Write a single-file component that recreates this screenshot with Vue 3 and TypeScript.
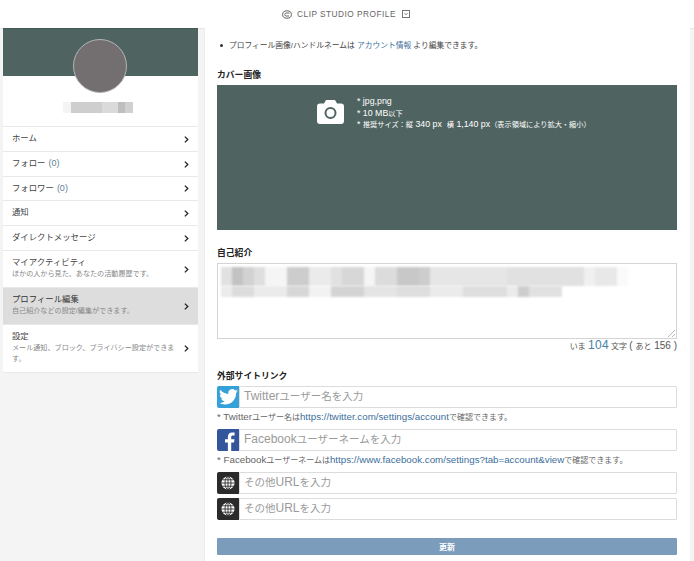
<script setup lang="ts">
const jp = '"Liberation Sans", "Noto Sans CJK JP", sans-serif'

const menu = [
  { label: 'ホーム' },
  { label: 'フォロー', count: '(0)' },
  { label: 'フォロワー', count: '(0)', h: 24 },
  { label: '通知' },
  { label: 'ダイレクトメッセージ' },
  { label: 'マイアクティビティ', sub: 'ほかの人から見た、あなたの活動履歴です。', h: 37 },
  { label: 'プロフィール編集', sub: '自己紹介などの設定/編集ができます。', h: 37, active: true },
  { label: '設定', sub: 'メール通知、ブロック、プライバシー設定ができます。', h: 48 },
]

// mosaic of the redacted bio text, one grey per 11px tile
const bioRows = [
  { h: 19, tiles: [225, 195, 210, 222, 245, 245, 205, 205, 235, 235, 225, 215, 215, 245, 220, 220, 200, 200, 205, 230, 230, 230, 230, 230, 230, 230, 225, 225, 225, 225, 225, 225, 225, 240, 232, 232, 250] },
  { h: 11, tiles: [235, 220, 220, 235, 235, 235, 215, 215, 242, 242, 212, 212, 212, 228, 228, 228, 222, 222, 222, 235, 235, 235, 222, 222, 222, 222, 235, 205, 225, 225, 225] },
]
const nameTiles = [244, 206, 206, 206, 206, 218, 218, 190, 208]
const tone = (g: number) => ({ background: `rgb(${g},${g},${g})` })
</script>

<template>
  <div class="page" :style="{ fontFamily: jp }">
    <header class="top">
      <svg width="10" height="9" viewBox="0 0 10 9">
        <ellipse cx="5" cy="4.5" rx="4.4" ry="3.7" fill="none" stroke="#666" stroke-width="1" />
        <path d="M7.500 3H4.300a1.500 1.500 0 0 0 0 3H7" fill="none" stroke="#666" stroke-width="1" />
      </svg>
      <span class="brand">CLIP STUDIO PROFILE</span>
      <svg width="8" height="8" viewBox="0 0 8 8">
        <rect x="0.5" y="0.5" width="7" height="7" fill="none" stroke="#777" />
        <path d="M2.500 3.200L4 4.800l1.500-1.600" fill="none" stroke="#777" />
      </svg>
    </header>

    <div class="body">
      <aside class="side">
        <div class="profile">
          <div class="cover-mini"></div>
          <div class="avatar"></div>
          <div class="name">
            <i v-for="(g, i) in nameTiles" :key="i" :style="tone(g)"></i>
          </div>
        </div>
        <ul class="menu">
          <li
            v-for="item in menu"
            :key="item.label"
            :class="{ active: item.active }"
            :style="{ height: (item.h ?? 25) + 'px' }"
          >
            <div class="menu-text">
              <div class="menu-label">
                {{ item.label }}<span v-if="item.count" class="count">{{ item.count }}</span>
              </div>
              <div v-if="item.sub" class="menu-sub">{{ item.sub }}</div>
            </div>
            <svg class="chev" width="5" height="7" viewBox="0 0 5 7">
              <path d="M0.800 0.600L3.800 3.500 0.800 6.400" fill="none" stroke="#222" stroke-width="1.300" />
            </svg>
          </li>
        </ul>
      </aside>

      <main class="main">
        <p class="notice">
          <span class="dot"></span>プロフィール画像/ハンドルネームは <a>アカウント情報</a> より編集できます。
        </p>

        <h3 class="cover-title">カバー画像</h3>
        <div class="cover">
          <svg class="camera" width="27" height="24" viewBox="0 0 27 24">
            <path d="M9 0h9l2 3.500h4a3 3 0 0 1 3 3V21a3 3 0 0 1-3 3H3a3 3 0 0 1-3-3V6.500a3 3 0 0 1 3-3h4z" fill="#fff" />
            <circle cx="13.500" cy="13" r="5" fill="none" stroke="#4f6461" stroke-width="2" />
          </svg>
          <div class="cover-info">
            <div><span class="lat">* jpg,png</span></div>
            <div><span class="lat">* 10 MB</span>以下</div>
            <div><span class="lat">* </span>推奨サイズ：縦<span class="lat"> 340 px&nbsp;&nbsp;</span>横<span class="lat"> 1,140 px</span>（表示領域により拡大・縮小）</div>
          </div>
        </div>

        <h3 class="bio-title">自己紹介</h3>
        <div class="bio">
          <div v-for="(row, r) in bioRows" :key="r" class="bio-row" :style="{ height: row.h + 'px' }">
            <i v-for="(g, i) in row.tiles" :key="i" :style="tone(g)"></i>
          </div>
          <svg class="grip" width="7" height="7" viewBox="0 0 7 7">
            <path d="M0 7L7 0M4 7L7 4" stroke="#999" stroke-width="0.7" />
          </svg>
        </div>
        <div class="counter">いま <b>104</b> 文字 <span class="lat">( </span>あと<span class="lat"> 156 )</span></div>

        <h3 class="link-title">外部サイトリンク</h3>

        <div class="field">
          <span class="badge tw">
            <svg width="19" height="16" viewBox="0 0 24 20">
              <path fill="#fff" d="M24 2.400c-.9.400-1.800.700-2.800.800 1-.600 1.800-1.600 2.200-2.700-1 .600-2 1-3.100 1.200A4.900 4.900 0 0 0 11.900 6.100C7.800 5.900 4.200 4 1.700.900a4.900 4.900 0 0 0 1.500 6.600c-.800 0-1.600-.200-2.200-.600v.100c0 2.400 1.700 4.400 3.900 4.800-.700.200-1.500.200-2.200.100.600 2 2.400 3.400 4.600 3.400A9.900 9.900 0 0 1 0 17.400 14 14 0 0 0 7.500 19.600c9.100 0 14-7.500 14-14v-.600c1-.700 1.800-1.600 2.500-2.600z" />
            </svg>
          </span>
          <div class="input"><span class="lat">Twitter</span>ユーザー名を入力</div>
        </div>
        <p class="note"><span class="lat">* Twitter</span>ユーザー名は<a class="lat">https://twitter.com/settings/account</a>で確認できます。</p>

        <div class="field">
          <span class="badge fb">
            <svg width="11" height="19" viewBox="0 0 11 19">
              <path fill="#fff" d="M7.200 19v-8.500H10l.5-3.300H7.200V5.100c0-1 .3-1.600 1.700-1.600h1.700V.6C10.300.5 9.300.4 8.100.4 5.600.4 3.900 1.900 3.900 4.700v2.500H1v3.300h2.900V19z" />
            </svg>
          </span>
          <div class="input"><span class="lat">Facebook</span>ユーザーネームを入力</div>
        </div>
        <p class="note"><span class="lat">* Facebook</span>ユーザーネームは<a class="lat">https://www.facebook.com/settings?tab=account&amp;view</a>で確認できます。</p>

        <div v-for="n in 2" :key="n" class="field other">
          <span class="badge web">
            <svg width="14" height="14" viewBox="0 0 14 14" fill="none">
              <circle cx="7" cy="7" r="6.500" fill="#fff" />
              <ellipse cx="7" cy="7" rx="3" ry="6.500" stroke="#2b2b2b" stroke-width="0.9" />
              <path d="M7 .5v13M.5 7h13M1.500 3.800h11M1.500 10.200h11" stroke="#2b2b2b" stroke-width="0.9" />
            </svg>
          </span>
          <div class="input">その他<span class="lat">URL</span>を入力</div>
        </div>

        <button class="submit">更新</button>
      </main>
    </div>
  </div>
</template>

<style scoped>
.page {
  width: 694px;
  height: 561px;
  overflow: hidden;
  background: #f4f4f4;
  color: #333;
}

.top {
  height: 29px;
  box-sizing: border-box;
  background: #fff;
  border-bottom: 1px solid #e6e6e6;
  display: flex;
  align-items: center;
  justify-content: center;
  gap: 5px;
  color: #666;
  padding-right: 2px;
}

.brand {
  font-size: 8.300px;
  letter-spacing: 0.48px;
  margin-right: 1px;
}

.body {
  display: flex;
  align-items: flex-start;
  padding-left: 3px;
  margin-top: -1px;
}

.side {
  width: 195px;
  flex: none;
  margin-right: 6px;
}

.profile {
  position: relative;
  height: 98px;
  background: #fff;
}

.cover-mini {
  height: 48px;
  background: #4f6461;
  box-sizing: border-box;
  border-top: 1px solid #445a57;
}

.avatar {
  position: absolute;
  left: 70px;
  top: 11px;
  width: 54px;
  height: 54px;
  border-radius: 50%;
  background: #736f70;
  border: 1px solid #b5b5b5;
  box-sizing: border-box;
}

.name {
  position: absolute;
  left: 60px;
  top: 74px;
  display: flex;
  filter: blur(0.6px);
}

.name i {
  width: 7.800px;
  height: 11px;
}

.menu {
  list-style: none;
  margin: 0;
  padding: 0;
  background: #fff;
  border-bottom: 1px solid #e9e9e9;
}

.menu li {
  display: flex;
  align-items: center;
  justify-content: space-between;
  box-sizing: border-box;
  padding: 0 9px 2px;
  border-top: 1px solid #e9e9e9;
}

.menu li.active {
  background: #dddddd;
}

.menu-text {
  width: 167px;
}

.menu-label {
  font-size: 8.400px;
  line-height: 12px;
  color: #444;
}

.active .menu-label {
  color: #333;
}

.count {
  color: #5f8296;
  font-size: 9px;
  margin-left: 3px;
}

.menu-sub {
  font-size: 7.100px;
  line-height: 11.500px;
  color: #888;
  margin-top: 1px;
}

.chev {
  flex: none;
  margin-top: 2px;
}

.main {
  width: 486px;
  height: 533px;
  box-sizing: border-box;
  background: #fff;
  border-left: 1px solid #ececec;
  padding: 0 13px 0 12px;
}

.notice {
  margin: 11px 0 0;
  font-size: 7.750px;
  line-height: 13px;
  color: #444;
  padding-left: 3px;
}

.dot {
  display: inline-block;
  width: 3px;
  height: 3px;
  border-radius: 50%;
  background: #333;
  margin-right: 6px;
  vertical-align: 1px;
}

a {
  color: #3d6f9c;
}

h3 {
  margin: 0;
  font-size: 8.800px;
  line-height: 12px;
  font-weight: 700;
  color: #222;
}

.cover-title {
  margin-top: 17px;
}

.cover {
  margin-top: 4px;
  height: 145px;
  background: #4f6461;
  position: relative;
}

.camera {
  position: absolute;
  left: 100px;
  top: 15px;
}

.cover-info {
  position: absolute;
  left: 140px;
  top: 11px;
  color: #fff;
  font-size: 7.200px;
  line-height: 10.500px;
}

.cover-info .lat {
  font-size: 8.800px;
}

.bio-title {
  margin-top: 17px;
}

.bio {
  position: relative;
  margin-top: 4px;
  height: 76px;
  box-sizing: border-box;
  border: 1px solid #d4d4d4;
  padding: 3px 0 0 3px;
}

.bio-row {
  display: flex;
  filter: blur(0.8px);
}

.bio-row i {
  width: 11px;
}

.grip {
  position: absolute;
  right: 1px;
  bottom: 1px;
}

.counter {
  height: 12px;
  text-align: right;
  font-size: 8px;
  line-height: 12px;
  color: #555;
}

.counter .lat {
  font-size: 10px;
}

.counter b {
  font-weight: 400;
  font-size: 12px;
  color: #4a7f9f;
  letter-spacing: 0.300px;
}

.link-title {
  margin-top: 19px;
}

.field {
  display: flex;
  height: 22px;
  margin-top: 4px;
}

.field.other {
  margin-top: 4px;
}

.note + .field.other {
  margin-top: 6px;
}

.badge {
  flex: none;
  width: 22px;
  height: 22px;
  display: flex;
  align-items: center;
  justify-content: center;
  border-radius: 2px 0 0 2px;
}

.tw {
  background: #34a1d9;
}

.fb {
  background: #33559c;
  align-items: flex-end;
}

.fb svg {
  margin-left: 3px;
}

.web {
  background: #2b2b2b;
}

.input {
  flex: 1;
  box-sizing: border-box;
  border: 1px solid #dcdcdc;
  border-radius: 1px;
  font-size: 10.500px;
  line-height: 18px;
  padding-left: 4px;
  color: #9a9a9a;
}

.input .lat {
  font-size: 12px;
}

.note {
  margin: 2px 0 0;
  height: 13px;
  font-size: 8px;
  line-height: 13px;
  color: #666;
}

.note .lat {
  font-size: 9.750px;
}

.note + .field {
  margin-top: 6px;
}

.submit {
  display: block;
  width: 100%;
  height: 17px;
  margin-top: 18px;
  border: 0;
  border-radius: 1px;
  background: #7c9cbc;
  color: #fff;
  font-family: inherit;
  font-size: 8px;
  font-weight: 700;
  padding: 0;
}
</style>
